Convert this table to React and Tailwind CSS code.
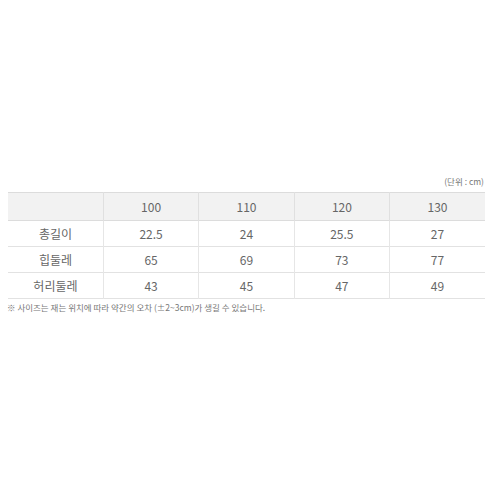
const SIZES = ['100', '110', '120', '130'];
const ROWS = [
  { label: '총길이', values: ['22.5', '24', '25.5', '27'] },
  { label: '힙둘레', values: ['65', '69', '73', '77'] },
  { label: '허리둘레', values: ['43', '45', '47', '49'] },
];

const font = { fontFamily: '"Noto Sans CJK KR", "Noto Sans", sans-serif' };

export default function App() {
  return (
    <div className="w-[492px] h-[492px] bg-white px-[8px] pt-[174px] text-[#666]" style={font}>
      <p className="text-right text-[8.5px] leading-[14px] mb-[4px] text-[#777]">(단위 : cm)</p>
      <table className="w-[477px] table-fixed border-collapse text-[12px]">
        <thead>
          <tr className="bg-[#f2f2f2] h-[28px] border-t border-b border-[#dcdcdc]">
            <th className="font-normal"></th>
            {SIZES.map((s) => (
              <th key={s} className="font-normal border-l border-[#e0e0e0]">{s}</th>
            ))}
          </tr>
        </thead>
        <tbody>
          {ROWS.map((r) => (
            <tr key={r.label} className="h-[26px] border-b border-[#e2e2e2]">
              <td className="text-center">{r.label}</td>
              {r.values.map((v, i) => (
                <td key={i} className="text-center border-l border-[#e6e6e6]">{v}</td>
              ))}
            </tr>
          ))}
        </tbody>
      </table>
      <p className="text-[8.5px] leading-[14px] mt-[1px] -ml-[1px] text-[#777]">
        ※ 사이즈는 재는 위치에 따라 약간의 오차 (±2~3cm)가 생길 수 있습니다.
      </p>
    </div>
  );
}
